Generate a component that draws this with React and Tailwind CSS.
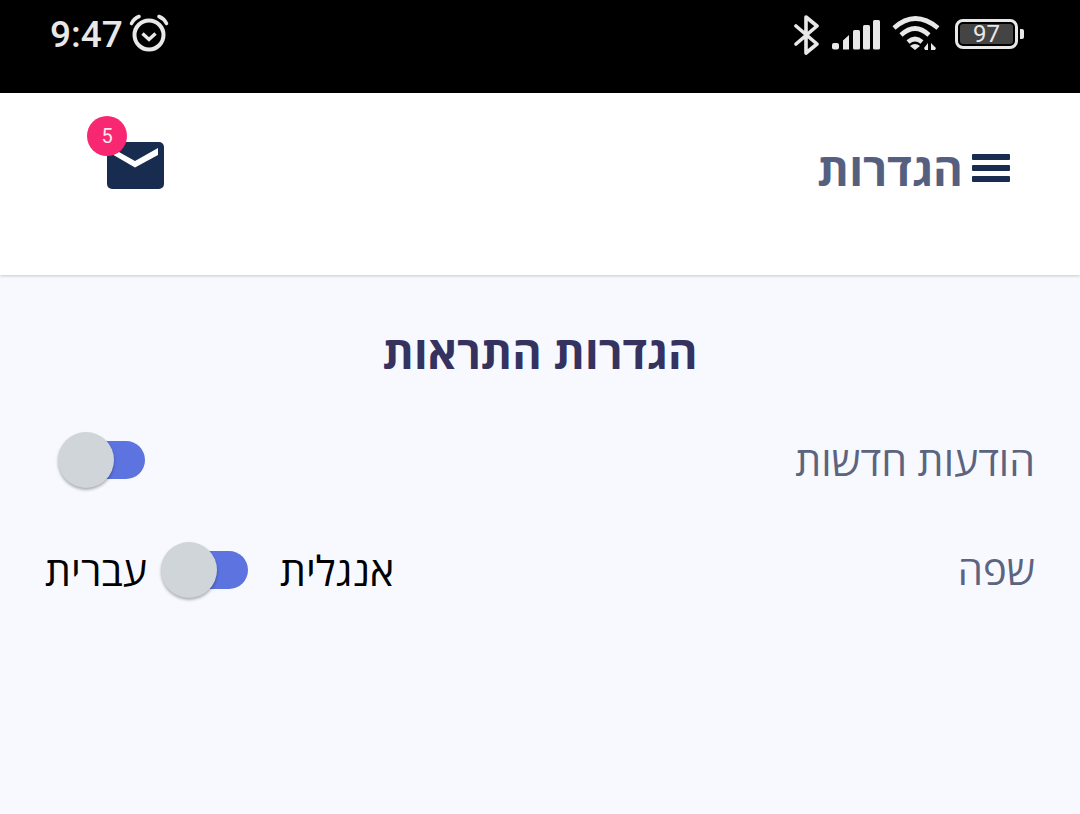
function Toggle() {
  return (
    <div className="relative w-[88px] h-[38px] flex justify-end shrink-0">
      <div className="w-[60px] h-[38px] rounded-full bg-[#5c73e0]" />
      <div className="absolute left-[1px] top-[-9px] w-[56px] h-[56px] rounded-full bg-[#d0d5d9] shadow-[0_2px_3px_rgba(0,0,0,0.3)]" />
    </div>
  );
}

function StatusBar() {
  return (
    <div className="h-[93px] bg-black flex justify-between items-start pl-[50px] pr-[56px] pt-[12px] text-[#e8e8e8]">
      <div className="flex items-start">
        <span className="text-[37px] leading-[46px] font-medium font-['Roboto',sans-serif]">9:47</span>
        <svg width="40" height="38" viewBox="0 0 40 38" className="ml-[6px] mt-[2px]" fill="none" stroke="#e8e8e8">
          <circle cx="20" cy="21" r="14.5" strokeWidth="4" />
          <path d="M13.5 19.5 L20 25.5 L26.5 19.5" strokeWidth="3.4" />
          <path d="M2.5 9.5 Q5 4.5 10 2.5 M37.5 9.5 Q35 4.5 30 2.5" strokeWidth="3.6" strokeLinecap="round" />
        </svg>
      </div>
      <div className="flex items-start mt-[2px]">
        <svg width="28" height="40" viewBox="0 0 28 40" fill="none" stroke="#e8e8e8" strokeWidth="3.6" className="mt-[1px]">
          <path d="M3 11 L24 29 L13 38 V2 L24 11 L3 29" strokeLinejoin="round" strokeLinecap="round" />
        </svg>
        <svg width="50" height="32" viewBox="0 0 50 32" fill="#e8e8e8" className="ml-[10px] mt-[5px]">
          <rect x="1" y="24" width="7" height="6.5" rx="2" />
          <path d="M12 21.5 L18 16 V30.5 H12 Z" />
          <rect x="22" y="11" width="7" height="19.5" rx="1.5" />
          <rect x="32" y="6" width="7" height="24.5" rx="1.5" />
          <rect x="42" y="1" width="7" height="29.5" rx="1.5" />
        </svg>
        <svg width="48" height="36" viewBox="0 0 48 36" fill="none" stroke="#e8e8e8" strokeWidth="4.6" className="ml-[11px] mt-[1px]">
          <path d="M2 13 Q23 -6 46 13" />
          <path d="M9 20 Q23 7 37 20" />
          <path d="M16 27 Q23 21 30 27" />
          <path d="M18 31 L23 35 L28 31 Q23 27 18 31 Z" fill="#e8e8e8" stroke="none" />
          <path d="M32 33 L36 28 V35 H33 Z M39 28 L44 33 L43 35 H39 Z" fill="#e8e8e8" stroke="none" />
        </svg>
        <div className="ml-[15px] mt-[5px] flex items-center">
          <div className="w-[63px] h-[30px] rounded-[8px] border-[3px] border-[#e8e8e8] p-[2px]">
            <div className="w-full h-full rounded-[3px] bg-[#444444] flex items-center justify-center text-[24px] leading-none font-['Roboto',sans-serif] text-[#e8e8e8]">
              97
            </div>
          </div>
          <div className="w-[4px] h-[10px] bg-[#e8e8e8] rounded-r-[2px] ml-[2px]" />
        </div>
      </div>
    </div>
  );
}

function Header() {
  return (
    <div className="h-[182px] bg-white shadow-[0_1px_3px_rgba(0,0,0,0.2)] relative flex justify-between items-start pl-[107px] pr-[70px]">
      <div className="relative mt-[49px] w-[57px] h-[47px]">
        <svg width="57" height="47" viewBox="0 0 57 47">
          <rect width="57" height="47" rx="5" fill="#182c50" />
          <path d="M3 11 L28 25.5 L51 13 V6 L28 19 L3 5 Z" fill="#ffffff" />
        </svg>
        <div className="absolute left-[-20px] top-[-26px] w-[40px] h-[40px] rounded-full bg-[#f72772] text-[#ffe6ee] flex items-center justify-center text-[20px] font-['Roboto',sans-serif]">
          5
        </div>
      </div>
      <div className="flex items-center mt-[50px]" dir="rtl">
        <div className="flex flex-col gap-[5px] ml-[9px]">
          <div className="w-[38px] h-[6px] rounded-[1px] bg-[#182c50]" />
          <div className="w-[38px] h-[6px] rounded-[1px] bg-[#182c50]" />
          <div className="w-[38px] h-[6px] rounded-[1px] bg-[#182c50]" />
        </div>
        <span className="text-[45.5px] leading-[50px] font-bold text-[#556080] font-['Open_Sans',sans-serif]">הגדרות</span>
      </div>
    </div>
  );
}

export default function App() {
  return (
    <div className="w-[1080px] h-[814px] overflow-hidden bg-[#f8f9ff] font-['Open_Sans',sans-serif]">
      <StatusBar />
      <Header />
      <div className="pt-[50px] px-[45px]">
        <h1 dir="rtl" className="text-center text-[45px] leading-[54px] font-bold text-[#35325f]">הגדרות התראות</h1>
        <div className="mt-[57px] flex justify-between items-center pl-[12px]">
          <Toggle />
          <span dir="rtl" className="text-[41px] leading-[48px] text-[#5c6480]">הודעות חדשות</span>
        </div>
        <div className="mt-[61px] flex justify-between items-center">
          <div className="flex items-center">
            <span dir="rtl" className="text-[41px] leading-[50px] text-black">עברית</span>
            <div className="ml-[13px]"><Toggle /></div>
            <span dir="rtl" className="ml-[32px] text-[41px] leading-[50px] text-black">אנגלית</span>
          </div>
          <span dir="rtl" className="text-[40px] leading-[48px] text-[#5c6480]">שפה</span>
        </div>
      </div>
    </div>
  );
}
